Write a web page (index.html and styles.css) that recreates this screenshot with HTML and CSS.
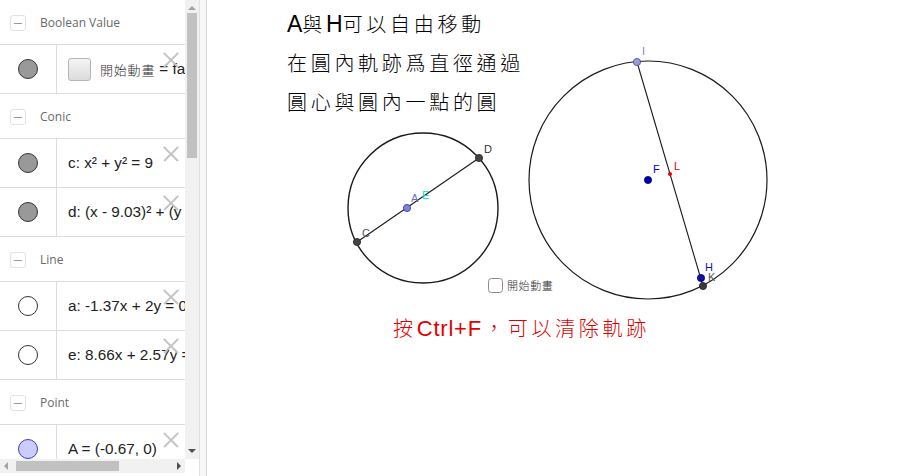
FILE: index.html
```html
<!DOCTYPE html>
<html lang="zh-Hant">
<head>
<meta charset="utf-8">
<title>GeoGebra</title>
<link rel="stylesheet" href="styles.css">
</head>
<body>
<div class="app">
  <aside class="algebra">
    <div class="list-wrap">
      <div class="list">
        <div class="group"><span class="minus"></span><span class="group-title">Boolean Value</span></div>
        <div class="item">
          <div class="marble-cell"><span class="marble gray"></span></div>
          <div class="item-text"><span class="chk"></span><span class="cjk">開始動畫</span> = false</div>
          <span class="del"></span>
        </div>
        <div class="group"><span class="minus"></span><span class="group-title">Conic</span></div>
        <div class="item">
          <div class="marble-cell"><span class="marble gray"></span></div>
          <div class="item-text">c: x² + y² = 9</div>
          <span class="del"></span>
        </div>
        <div class="item">
          <div class="marble-cell"><span class="marble gray"></span></div>
          <div class="item-text">d: (x - 9.03)² + (y - 0)² = 25</div>
          <span class="del"></span>
        </div>
        <div class="group"><span class="minus"></span><span class="group-title">Line</span></div>
        <div class="item">
          <div class="marble-cell"><span class="marble empty"></span></div>
          <div class="item-text">a: -1.37x + 2y = 0.92</div>
          <span class="del"></span>
        </div>
        <div class="item">
          <div class="marble-cell"><span class="marble empty"></span></div>
          <div class="item-text">e: 8.66x + 2.57y = 78.2</div>
          <span class="del"></span>
        </div>
        <div class="group"><span class="minus"></span><span class="group-title">Point</span></div>
        <div class="item">
          <div class="marble-cell"><span class="marble lav"></span></div>
          <div class="item-text">A = (-0.67, 0)</div>
          <span class="del"></span>
        </div>
      </div>
      <div class="vscroll">
        <span class="arrow up"></span>
        <div class="vtrack"><div class="vthumb"></div></div>
        <span class="arrow down"></span>
      </div>
    </div>
    <div class="hscroll-row">
      <div class="hscroll">
        <span class="arrow left"></span>
        <div class="htrack"><div class="hthumb"></div></div>
        <span class="arrow right"></span>
      </div>
      <div class="corner"></div>
    </div>
  </aside>
  <div class="splitter"></div>
  <main class="canvas">
    <svg class="board" viewBox="207 0 703 476" width="703" height="476">
      <circle cx="423" cy="208" r="75" fill="none" stroke="#1a1a1a" stroke-width="1.4"/>
      <circle cx="648" cy="180" r="119" fill="none" stroke="#1a1a1a" stroke-width="1.2"/>
      <line x1="357" y1="242" x2="479" y2="158" stroke="#1a1a1a" stroke-width="1.1"/>
      <line x1="637" y1="62" x2="703" y2="286" stroke="#1a1a1a" stroke-width="1.1"/>
      <circle cx="479" cy="158" r="3.6" fill="#444" stroke="#222" stroke-width="0.8"/>
      <circle cx="357" cy="242" r="3.6" fill="#444" stroke="#222" stroke-width="0.8"/>
      <circle cx="407" cy="208" r="3.6" fill="#8080e6" stroke="#333399" stroke-width="0.8"/>
      <circle cx="637" cy="62" r="3.6" fill="#9a9ad6" stroke="#4a4a8a" stroke-width="0.8"/>
      <circle cx="648" cy="180" r="3.6" fill="#0000b0" stroke="#000066" stroke-width="0.8"/>
      <circle cx="670" cy="174" r="2" fill="#e00000"/>
      <circle cx="701" cy="278" r="3.6" fill="#1010a8" stroke="#000066" stroke-width="0.8"/>
      <circle cx="703" cy="286" r="3.6" fill="#3a3a3a" stroke="#222" stroke-width="0.8"/>
      <g class="lbl">
        <text x="484" y="153" fill="#333">D</text>
        <text x="362" y="237" fill="#555">C</text>
        <text x="411" y="202" fill="#7070d0">A</text>
        <text x="422" y="199" fill="#00d8d8">E</text>
        <text x="653" y="173" fill="#0000cc">F</text>
        <text x="674" y="170" fill="#e00000">L</text>
        <text x="642" y="55" fill="#8080dd">I</text>
        <text x="705" y="271" fill="#1010b0">H</text>
        <text x="708" y="281" fill="#555">K</text>
      </g>
      <rect x="488.5" y="278.5" width="14" height="14" rx="3" fill="#fff" stroke="#8a8a8a" stroke-width="1"/>
      <text class="cb-label" x="507" y="290">開始動畫</text>
    </svg>
    <div class="note">
      <div><span class="lat">A</span><span class="cj">與</span><span class="lat">H</span><span class="cj">可以自由移動</span></div>
      <div><span class="cj">在圓內軌跡爲直徑通過</span></div>
      <div><span class="cj">圓心與圓內一點的圓</span></div>
    </div>
    <div class="note red">
      <div><span class="cj">按</span><span class="lat">Ctrl+F</span><span class="cj">，可以清除軌跡</span></div>
    </div>
  </main>
</div>
</body>
</html>
```

FILE: styles.css
```css
* { box-sizing: border-box; }
html, body { margin: 0; padding: 0; background: #fff; }
body { width: 910px; height: 476px; overflow: hidden; font-family: "Liberation Sans", Arial, sans-serif; }

.app { display: flex; width: 910px; height: 476px; }

.algebra { width: 199px; height: 476px; display: flex; flex-direction: column; background: #fff; }
.list-wrap { display: flex; height: 459px; }
.list { width: 185px; height: 459px; overflow: hidden; }

.group { height: 45px; border-bottom: 1px solid #dcdcdc; display: flex; align-items: center; padding-left: 10px; padding-top: 1px; }
.minus { width: 16px; height: 16px; border: 1px solid #e2e2e2; border-radius: 3px; position: relative; flex: none; }
.minus::after { content: ""; position: absolute; left: 3px; right: 3px; top: 7px; height: 1px; background: #9a9a9a; }
.group-title { margin-left: 14px; font-family: "Open Sans", "Liberation Sans", sans-serif; font-size: 12px; color: #6a6a6a; }

.item { height: 49px; border-bottom: 1px solid #dcdcdc; display: flex; position: relative; }
.marble-cell { width: 57px; flex: none; border-right: 1px solid #dcdcdc; display: flex; align-items: center; justify-content: center; }
.marble { width: 20px; height: 20px; border-radius: 50%; border: 1px solid #333; display: block; }
.marble.gray { background: #999; }
.marble.empty { background: #fff; }
.marble.lav { background: #ccccff; border-color: #3b3bc8; }

.item-text { flex: 1; min-width: 0; padding-left: 11px; display: flex; align-items: center; white-space: nowrap; overflow: hidden; font-size: 15.3px; color: #222; }
.cjk { font-family: "Noto Sans CJK TC", sans-serif; font-weight: 300; font-size: 13px; letter-spacing: 0.8px; margin-right: 4px; color: #333; }
.chk { width: 23px; height: 23px; flex: none; border: 1px solid #b5b5b5; border-radius: 3px; background: linear-gradient(#f4f4f4, #dcdcdc); margin-right: 9px; }

.del { position: absolute; left: 163px; top: 7px; width: 16px; height: 16px; }
.del::before, .del::after { content: ""; position: absolute; left: -2px; top: 7px; width: 20px; height: 1.5px; background: #c4c4c4; }
.del::before { transform: rotate(45deg); }
.del::after { transform: rotate(-45deg); }

.vscroll { width: 14px; height: 459px; background: #f1f1f1; display: flex; flex-direction: column; align-items: center; }
.vtrack { flex: 1; width: 100%; padding: 0 2px; }
.vthumb { width: 100%; height: 145px; background: #c1c1c1; }
.arrow { flex: none; width: 0; height: 0; border-style: solid; }
.arrow.up { margin: 6px 0 3px; border-width: 0 4px 4px 4px; border-color: transparent transparent #a3a3a3 transparent; }
.arrow.down { margin: 3px 0 6px; border-width: 4px 4px 0 4px; border-color: #505050 transparent transparent transparent; }

.hscroll-row { display: flex; height: 14px; }
.hscroll { width: 185px; height: 14px; background: #f1f1f1; display: flex; align-items: center; }
.htrack { flex: 1; height: 100%; padding: 2px 0; }
.hthumb { width: 103px; height: 100%; background: #c1c1c1; margin-left: 5px; }
.arrow.left { margin: 0 3px 0 4px; border-width: 4px 4px 4px 0; border-color: transparent #a3a3a3 transparent transparent; }
.arrow.right { margin: 0 4px 0 3px; border-width: 4px 0 4px 4px; border-color: transparent transparent transparent #505050; }
.corner { flex: 1; background: #fff; }

.splitter { width: 8px; height: 476px; background: #f7f7f7; border-left: 1px solid #e0e0e0; border-right: 1px solid #d4d4d4; flex: none; }

.canvas { flex: 1; position: relative; height: 476px; overflow: hidden; background: #fff; }
.board { position: absolute; left: 0; top: 0; display: block; }
.lbl text { font-family: "Liberation Sans", Arial, sans-serif; font-size: 11px; }
.cb-label { font-family: "Noto Sans CJK TC", sans-serif; font-weight: 300; font-size: 11px; letter-spacing: 0.6px; fill: #333; }

.note { position: absolute; left: 80px; top: 6px; color: #000; line-height: 36px; white-space: nowrap; }
.note.red { left: 186px; top: 310px; color: #e00000; }
.note .cj { font-family: "Noto Sans CJK TC", sans-serif; font-weight: 300; font-size: 20px; letter-spacing: 3.7px; }
.note .lat { font-family: "Liberation Sans", Arial, sans-serif; font-size: 23px; }
.note.red .lat { font-size: 22px; letter-spacing: 0.8px; margin-right: 2px; }
```
